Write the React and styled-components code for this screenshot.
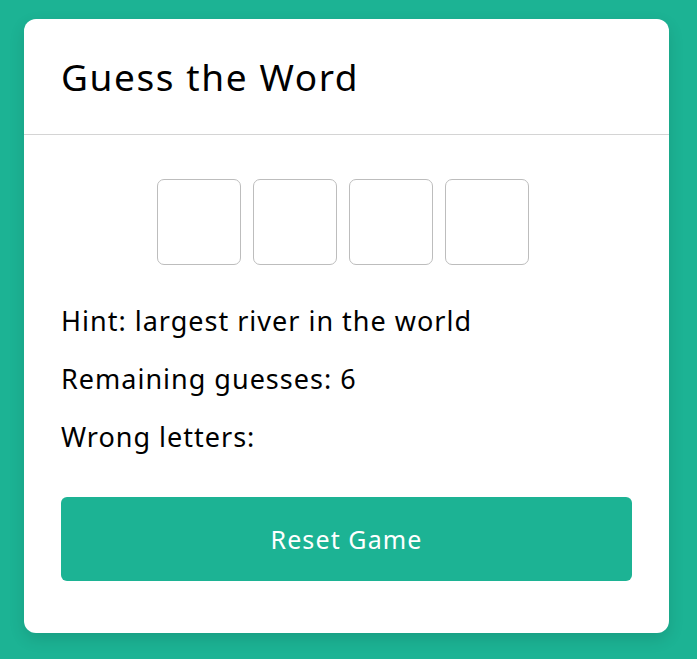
import styled, { createGlobalStyle } from "styled-components"
import { useState } from "react"

const GlobalStyle = createGlobalStyle`
  html, body {
    margin: 0;
    padding: 0;
    background: #1cb394;
    font-family: "Noto Sans", "Open Sans", sans-serif;
  }
`

const Page = styled.div`
  min-height: 659px;
  padding: 19px 0 0 24px;
  box-sizing: border-box;
`

const Card = styled.div`
  width: 645px;
  background: #fff;
  border-radius: 12px;
  box-shadow: 0 6px 16px rgba(0, 0, 0, 0.12);
  overflow: hidden;
`

const Header = styled.div`
  height: 115px;
  display: flex;
  align-items: center;
  padding: 0 37px;
  border-bottom: 1px solid #d4d4d4;

  h1 {
    margin: 0;
    font-size: 37px;
    font-weight: 400;
    letter-spacing: 1.6px;
    color: #000;
  }
`

const Body = styled.div`
  padding: 44px 37px 52px;
`

const Slots = styled.div`
  display: flex;
  justify-content: center;
  gap: 12px;
  padding-right: 7px;
  margin-bottom: 27px;
`

const Slot = styled.div`
  width: 82px;
  height: 84px;
  border: 1px solid #bdbdbd;
  border-radius: 7px;
  display: flex;
  align-items: center;
  justify-content: center;
  font-size: 32px;
`

const Line = styled.p`
  margin: 0;
  height: 58px;
  line-height: 58px;
  font-size: 27px;
  letter-spacing: 1px;
  color: #000;
`

const ResetButton = styled.button`
  display: block;
  width: 100%;
  height: 84px;
  margin-top: 31px;
  border: 0;
  border-radius: 6px;
  background: #1cb394;
  color: #fff;
  font-family: inherit;
  font-size: 25px;
  letter-spacing: 1.1px;
  cursor: pointer;
`

const App = () => {
  const [word] = useState("NILE")
  const [guessed, setGuessed] = useState([])
  const [wrong, setWrong] = useState([])

  const resetHandler = () => {
    setGuessed([])
    setWrong([])
  }

  return (
    <Page>
      <GlobalStyle />
      <Card>
        <Header>
          <h1>Guess the Word</h1>
        </Header>
        <Body>
          <Slots>
            {word.split("").map((letter, i) => (
              <Slot key={i}>{guessed.includes(letter) ? letter : ""}</Slot>
            ))}
          </Slots>
          <Line>Hint: largest river in the world</Line>
          <Line>Remaining guesses: {6 - wrong.length}</Line>
          <Line>Wrong letters: {wrong.join(", ")}</Line>
          <ResetButton onClick={resetHandler}>Reset Game</ResetButton>
        </Body>
      </Card>
    </Page>
  )
}

export default App
